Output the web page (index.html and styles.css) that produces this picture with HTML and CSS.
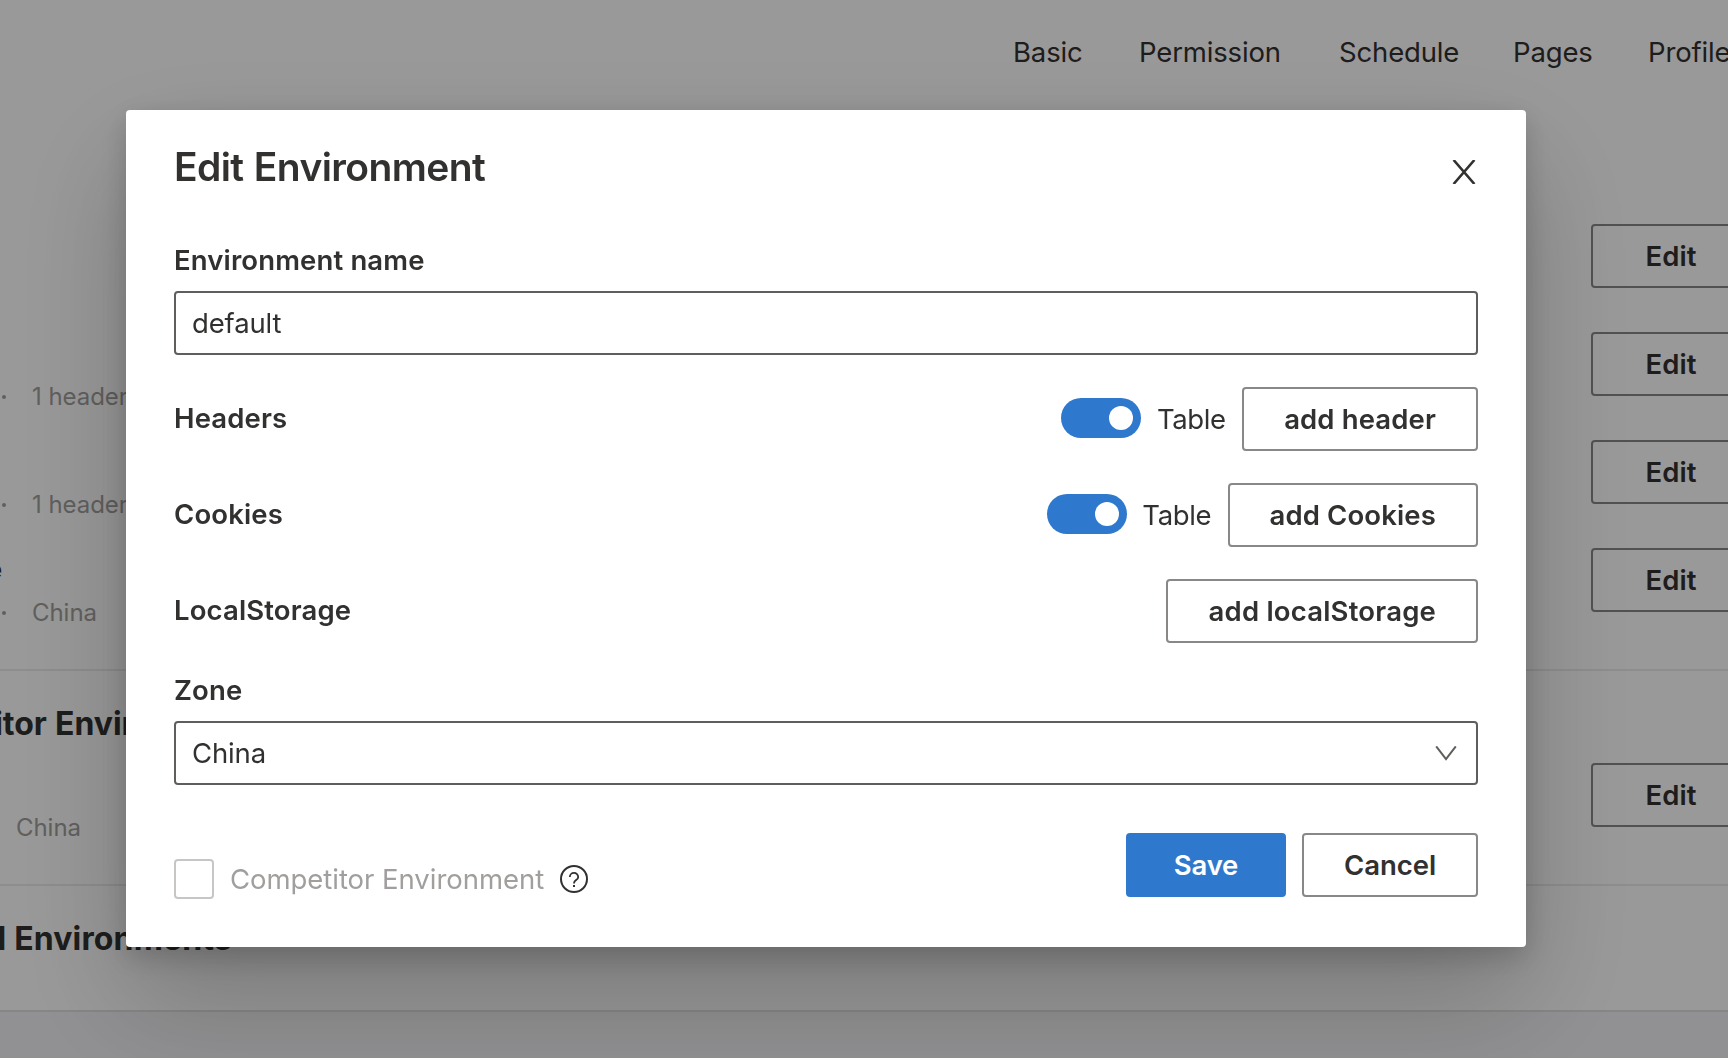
FILE: index.html
```html
<!DOCTYPE html>
<html lang="en">
<head>
<meta charset="utf-8">
<title>Edit Environment</title>
<link rel="stylesheet" href="styles.css">
</head>
<body>
<div class="page">
  <nav class="nav">
    <a>Basic</a><a>Permission</a><a>Schedule</a><a>Pages</a><a>Profile</a>
  </nav>
  <main>
    <section class="group group-first">
      <div class="env">
        <div class="env-text"></div>
        <button class="btn btn-edit">Edit</button>
      </div>
      <div class="env">
        <div class="env-text"><div class="env-name"></div><div class="env-meta"><i class="dot"></i><span>1 header</span></div></div>
        <button class="btn btn-edit">Edit</button>
      </div>
      <div class="env">
        <div class="env-text"><div class="env-name"></div><div class="env-meta"><i class="dot"></i><span>1 header</span></div></div>
        <button class="btn btn-edit">Edit</button>
      </div>
      <div class="env">
        <div class="env-text"><div class="env-name"><span>e</span></div><div class="env-meta"><i class="dot"></i><span>China</span></div></div>
        <button class="btn btn-edit">Edit</button>
      </div>
    </section>
    <section class="group">
      <h2 class="group-title group-title-wide"><span>Competitor Environments</span></h2>
      <div class="env">
        <div class="env-text"><div class="env-name"></div><div class="env-meta env-meta-plain"><span>China</span></div></div>
        <button class="btn btn-edit">Edit</button>
      </div>
    </section>
    <section class="group group-last">
      <h2 class="group-title"><span>l Environments</span></h2>
    </section>
  </main>
</div>

<div class="overlay">
  <div class="modal" role="dialog">
    <header class="modal-head">
      <h1 class="modal-title">Edit Environment</h1>
      <svg class="close" width="24" height="24" viewBox="0 0 24 24" fill="none" stroke="#323130" stroke-width="2.6"><path d="M1.6 0 22.4 24M22.4 0 1.6 24"/></svg>
    </header>

    <label class="label">Environment name</label>
    <div class="field">default</div>

    <div class="rows">
      <div class="row">
        <span class="label-inline">Headers</span>
        <span class="switch"><i class="knob"></i></span>
        <span class="switch-text">Table</span>
        <button class="btn">add header</button>
      </div>
      <div class="row">
        <span class="label-inline">Cookies</span>
        <span class="switch"><i class="knob"></i></span>
        <span class="switch-text">Table</span>
        <button class="btn">add Cookies</button>
      </div>
      <div class="row">
        <span class="label-inline">LocalStorage</span>
        <button class="btn btn-storage">add localStorage</button>
      </div>
    </div>

    <label class="label">Zone</label>
    <div class="field field-select">
      <span>China</span>
      <svg width="22" height="15" viewBox="0 0 22 15" fill="none" stroke="#605e5c" stroke-width="2"><path d="M1.2.4 11 13 20.8.4"/></svg>
    </div>

    <footer class="modal-foot">
      <div class="check">
        <i class="box"></i>
        <span class="check-text">Competitor Environment</span>
        <svg width="28" height="28" viewBox="0 0 28 28" fill="none" stroke="#323130" stroke-width="2"><circle cx="14" cy="14" r="13"/><path stroke-width="1.8" d="M9.8 12a4.2 4.2 0 0 1 8.4 0c0 2.4-2 2.8-3.1 3.9-.8.8-1.1 1.4-1.1 2.6"/><path d="M14 20v2.1"/></svg>
      </div>
      <button class="btn btn-primary">Save</button>
      <button class="btn btn-cancel">Cancel</button>
    </footer>
  </div>
</div>
</body>
</html>
```
FILE: styles.css
```css
* { box-sizing: border-box; }

body {
  margin: 0;
  height: 1058px;
  overflow: hidden;
  background: #f2f2f5;
  color: #323130;
  font: 400 27.5px/40px Inter, "Liberation Sans", sans-serif;
  letter-spacing: -0.15px;
  white-space: nowrap;
}

h1, h2 { margin: 0; }

/* Page behind the dialog */
.page { height: 1058px; overflow: hidden; }

.nav {
  display: grid;
  grid-template-columns: 126px 200px 174px 135px auto;
  height: 202px;
  padding: 32px 0 0 1013px;
  background: #fff;
}

.group {
  padding: 35px 0;
  background: #fff;
  border-bottom: 2px solid #edebe9;
}
.group-first { padding-top: 0; }
.group-last { padding-bottom: 54px; border-color: #e1dfdd; }

.group-title {
  display: flex;
  justify-content: flex-end;
  width: 232px;
  font-size: 32px;
  line-height: 36px;
  height: 35px;
  font-weight: 700;
  letter-spacing: 0.15px;
}
.group-title-wide { width: 271px; letter-spacing: 0; word-spacing: 0.5px; }

.env {
  display: flex;
  justify-content: space-between;
  height: 108px;
  padding-top: 22px;
  margin-right: -23px;
}
.env-text { margin-top: -2px; }
.env-name {
  display: flex;
  justify-content: flex-end;
  width: 2px;
  height: 38px;
  line-height: 46px;
  font-weight: 600;
}
.env-meta {
  display: flex;
  align-items: center;
  gap: 26px;
  margin-top: 10px;
  padding-left: 2px;
  font-size: 24px;
  line-height: 36px;
  letter-spacing: -0.05px;
  color: #a19f9d;
}
.env-meta span { padding-top: 1px; }
.env-meta-plain { padding-left: 16px; }
.dot { width: 4px; height: 4px; border-radius: 50%; background: #a19f9d; }

/* Buttons */
.btn {
  height: 64px;
  padding: 0 40px;
  border: 2px solid #8a8886;
  border-radius: 4px;
  background: #fff;
  color: #323130;
  font: 600 27.5px/60px Inter, "Liberation Sans", sans-serif;
  letter-spacing: 0.13px;
}
.btn-edit { width: 160px; }
.btn-storage { padding: 0 40px 0 41px; letter-spacing: 0.2px; }
.btn-primary { width: 160px; border-color: #2e79cd; background: #2e79cd; color: #fff; letter-spacing: -0.2px; }
.btn-cancel { width: 176px; padding: 0; letter-spacing: -0.03px; }

/* Dialog */
.overlay {
  position: fixed;
  inset: 0;
  padding: 110px 0 0 126px;
  background: rgba(0, 0, 0, 0.4);
}
.modal {
  width: 1400px;
  height: 837px;
  padding: 29px 48px 0;
  border-radius: 4px;
  background: #fff;
  box-shadow: 0 51.2px 115.2px rgba(0, 0, 0, 0.22), 0 9.6px 28.8px rgba(0, 0, 0, 0.18);
}
.modal-head { display: flex; justify-content: space-between; height: 101px; }
.modal-title { font-size: 39px; line-height: 56px; font-weight: 600; letter-spacing: -0.6px; word-spacing: 1px; }
.close { margin: 21px 2px 0 0; }

.label { display: block; margin-bottom: 11px; font-weight: 600; letter-spacing: 0.14px; }
.field {
  height: 64px;
  padding: 0 16px;
  border: 2px solid #605e5c;
  border-radius: 4px;
  line-height: 60px;
}
.field-select { display: flex; align-items: center; justify-content: space-between; padding-right: 19px; }

.rows { display: grid; gap: 32px; margin: 32px 0 27px; }
.row { display: flex; align-items: center; }
.label-inline { margin-right: auto; padding-bottom: 2px; font-weight: 600; letter-spacing: 0.13px; }
.switch {
  display: flex;
  align-items: center;
  justify-content: flex-end;
  width: 80px;
  height: 40px;
  margin-bottom: 2px;
  padding-right: 8px;
  border-radius: 20px;
  background: #2e79cd;
}
.knob { width: 24px; height: 24px; border-radius: 50%; background: #fff; }
.switch-text { margin: 0 16.5px 0 15.5px; letter-spacing: -0.4px; }

.modal-foot { display: flex; align-items: flex-start; gap: 16px; margin-top: 48px; }
.check { display: flex; align-items: center; gap: 16px; margin: 26px auto 0 0; }
.box { width: 40px; height: 40px; border: 2px solid #c8c6c4; border-radius: 4px; }
.check-text { color: #a19f9d; letter-spacing: -0.04px; }
```
